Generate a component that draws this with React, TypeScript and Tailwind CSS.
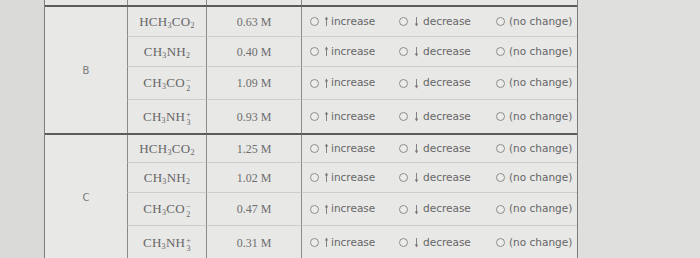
import React from "react"

type Row = { formula: React.ReactNode; conc: string }

const serif = { fontFamily: '"Liberation Serif", "Times New Roman", serif' }
const sans = { fontFamily: '"DejaVu Sans", Verdana, sans-serif' }

function Sub({ n, charge }: { n: string; charge?: string }) {
    if (!charge) return <sub className="text-[8px] relative top-[2px] leading-none">{n}</sub>
    return (
        <span className="inline-flex flex-col items-center text-[8px] leading-[8px] align-middle relative top-[1px] ml-[1px]">
            <span className="h-[8px] leading-[8px]">{charge}</span>
            <span className="h-[8px] leading-[8px]">{n}</span>
        </span>
    )
}

const acid = <>HCH<Sub n="3" />CO<Sub n="2" /></>
const base = <>CH<Sub n="3" />NH<Sub n="2" /></>
const anion = <>CH<Sub n="3" />CO<Sub n="2" charge="−" /></>
const cation = <>CH<Sub n="3" />NH<Sub n="3" charge="+" /></>

const sections: { label: string; rows: string; data: Row[] }[] = [
    {
        label: "B",
        rows: "grid-rows-[30px_30px_33px_33px]",
        data: [
            { formula: acid, conc: "0.63 M" },
            { formula: base, conc: "0.40 M" },
            { formula: anion, conc: "1.09 M" },
            { formula: cation, conc: "0.93 M" },
        ],
    },
    {
        label: "C",
        rows: "grid-rows-[28px_30px_33px_33px]",
        data: [
            { formula: acid, conc: "1.25 M" },
            { formula: base, conc: "1.02 M" },
            { formula: anion, conc: "0.47 M" },
            { formula: cation, conc: "0.31 M" },
        ],
    },
]

function Radio() {
    return <span className="inline-block w-[9px] h-[9px] rounded-full border border-[#8c8c8c] bg-[#ececea] shrink-0" />
}

function Arrow({ down }: { down?: boolean }) {
    return (
        <svg width="5" height="11" viewBox="0 0 5 11" className="shrink-0">
            {down ? (
                <>
                    <line x1="2.5" y1="1" x2="2.5" y2="9" stroke="#777" strokeWidth="0.9" />
                    <path d="M0.8 7.5 L2.5 10.5 L4.2 7.5 Z" fill="#777" />
                </>
            ) : (
                <>
                    <line x1="2.5" y1="2" x2="2.5" y2="10" stroke="#777" strokeWidth="0.9" />
                    <path d="M0.8 3.5 L2.5 0.5 L4.2 3.5 Z" fill="#777" />
                </>
            )}
        </svg>
    )
}

function Choices() {
    return (
        <div className="flex items-center h-full pl-[8px] text-[10.5px] text-[#666]" style={sans}>
            <div className="flex items-center w-[89px]">
                <Radio />
                <span className="ml-[5px]"><Arrow /></span>
                <span className="ml-[2px]">increase</span>
            </div>
            <div className="flex items-center w-[97px]">
                <Radio />
                <span className="ml-[6px]"><Arrow down /></span>
                <span className="ml-[4px]">decrease</span>
            </div>
            <div className="flex items-center">
                <Radio />
                <span className="ml-[4px]">(no change)</span>
            </div>
        </div>
    )
}

export default function App() {
    return (
        <div className="w-[700px] h-[258px] flex overflow-hidden bg-[#e3e3e1]">
            {/* margin left of the table */}
            <div className="w-[44px] h-full bg-[#dadad8]" />

            <div className="w-[534px] flex flex-col border-l border-r border-[#7c7c7c] bg-[#e8e8e6]">
                {/* tail of the section above */}
                <div className="grid grid-cols-[82px_79px_95px_276px] h-[5px] shrink-0">
                    <div />
                    <div className="border-l border-[#8a8a8a]" />
                    <div className="border-l border-[#8a8a8a]" />
                    <div className="border-l border-[#8a8a8a]" />
                </div>

                {sections.map((s) => (
                    <div
                        key={s.label}
                        className={`grid grid-cols-[82px_79px_95px_276px] ${s.rows} border-t-2 border-[#5c5c5c] shrink-0`}
                    >
                        <div className="row-span-4 flex items-center justify-center text-[10px] text-[#7a7a7a]" style={sans}>
                            {s.label}
                        </div>
                        {s.data.map((r, i) => {
                            const last = i === s.data.length - 1
                            const cell = `border-l border-[#8a8a8a] ${last ? "" : "border-b border-b-[#cdcdcb]"}`
                            return (
                                <React.Fragment key={i}>
                                    <div
                                        className={`${cell} flex items-center justify-center text-[13px] text-[#666] tracking-[0.3px]`}
                                        style={serif}
                                    >
                                        <span>{r.formula}</span>
                                    </div>
                                    <div
                                        className={`${cell} flex items-center justify-center text-[12px] text-[#6e6e6e]`}
                                        style={serif}
                                    >
                                        {r.conc}
                                    </div>
                                    <div className={cell}>
                                        <Choices />
                                    </div>
                                </React.Fragment>
                            )
                        })}
                    </div>
                ))}
            </div>

            <div className="flex-1 h-full bg-[#dfdfdd]" />
        </div>
    )
}
